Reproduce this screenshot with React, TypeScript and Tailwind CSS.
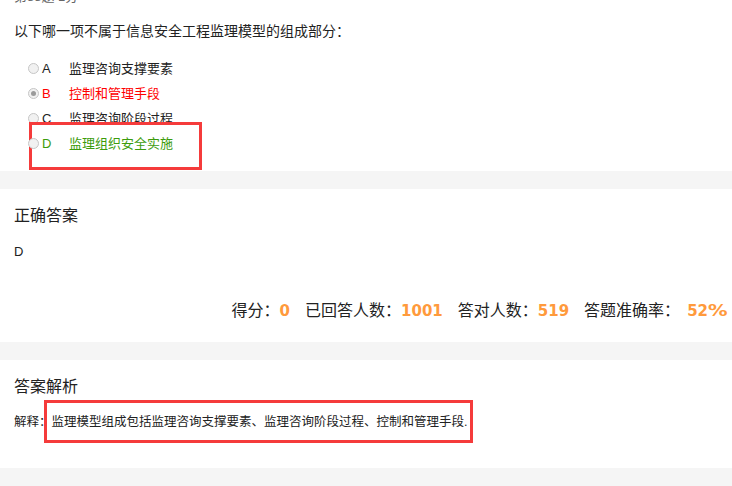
import React from 'react';

const FONT = { fontFamily: '"Liberation Sans", "Noto Sans CJK SC", sans-serif' };

type Opt = { key: string; text: string; tone: 'normal' | 'wrong' | 'right'; checked?: boolean };

const OPTIONS: Opt[] = [
    { key: 'A', text: '监理咨询支撑要素', tone: 'normal' },
    { key: 'B', text: '控制和管理手段', tone: 'wrong', checked: true },
    { key: 'C', text: '监理咨询阶段过程', tone: 'normal' },
    { key: 'D', text: '监理组织安全实施', tone: 'right' },
];

const toneClass = {
    normal: 'text-[#222]',
    wrong: 'text-[#ff0000]',
    right: 'text-[#3c9c0c]',
};

const Radio = ({ checked }: { checked?: boolean }) => (
    <span className="w-[11px] h-[11px] rounded-full border border-[#c6c6c6] bg-[#f1f1f1] flex items-center justify-center shrink-0">
        {checked && <span className="w-[5px] h-[5px] rounded-full bg-[#9b9b9b]" />}
    </span>
);

const Band = () => <div className="h-[18px] bg-[#f5f5f5]" />;

const Stat = ({ label, value, last }: { label: string; value: string; last?: boolean }) => (
    <div className="flex items-center">
        <span className="text-[16px] text-[#222]">{label}</span>
        <span
            className={`text-[15px] font-bold text-[#ff9a3c] flex ${last ? 'ml-[7px]' : ''}`}
            style={{ fontFamily: '"DejaVu Sans", sans-serif' }}
        >
            {value.replace('%', '')}
            {value.endsWith('%') && (
                <span className="inline-block w-[20px] origin-left scale-x-[1.3]">%</span>
            )}
        </span>
    </div>
);

export default function App() {
    return (
        <div className="w-[732px] h-[486px] overflow-hidden bg-white" style={FONT}>
            {/* question */}
            <div className="relative flow-root px-[14px] pb-[15px]">
                <div className="-mt-[13px] h-[20px] leading-[20px] text-[13px] text-[#666]">第88题 1分</div>
                <div className="mt-[14px] h-[20px] leading-[20px] text-[14px] text-[#222]">
                    以下哪一项不属于信息安全工程监理模型的组成部分：
                </div>
                <div className="mt-[15px] pl-[14px]">
                    {OPTIONS.map(o => (
                        <div
                            key={o.key}
                            className={`relative h-[25px] flex items-center text-[13px] ${toneClass[o.tone]} ${o.key === 'D' ? 'z-20' : ''}`}
                        >
                            <Radio checked={o.checked} />
                            <span className="ml-[3px] w-[27px]">{o.key}</span>
                            <span>{o.text}</span>
                        </div>
                    ))}
                </div>
                <div className="absolute z-10 left-[29px] top-[122px] w-[173px] h-[48px] bg-white border-[3px] border-[#f53b3b]" />
            </div>

            <Band />

            {/* correct answer */}
            <div className="px-[14px] pt-[15px] pb-[19px]">
                <div className="h-[24px] leading-[24px] text-[16px] text-[#222]">正确答案</div>
                <div className="mt-[14px] h-[20px] leading-[20px] text-[13px] text-[#222]">D</div>
                <div className="mt-[37px] -mr-[10px] h-[24px] flex justify-end items-center gap-[15px]">
                    <Stat label="得分：" value="0" />
                    <Stat label="已回答人数：" value="1001" />
                    <Stat label="答对人数：" value="519" />
                    <Stat label="答题准确率：" value="52%" last />
                </div>
            </div>

            <Band />

            {/* analysis */}
            <div className="relative px-[14px] pt-[15px] pb-[36px]">
                <div className="h-[24px] leading-[24px] text-[16px] text-[#222]">答案解析</div>
                <div className="mt-[13px] h-[20px] leading-[20px] text-[12.5px] text-[#222]">
                    解释：监理模型组成包括监理咨询支撑要素、监理咨询阶段过程、控制和管理手段.
                </div>
                <div className="absolute left-[44px] top-[40px] w-[429px] h-[43px] border-[3px] border-[#f53b3b]" />
            </div>

            <Band />
        </div>
    );
}
